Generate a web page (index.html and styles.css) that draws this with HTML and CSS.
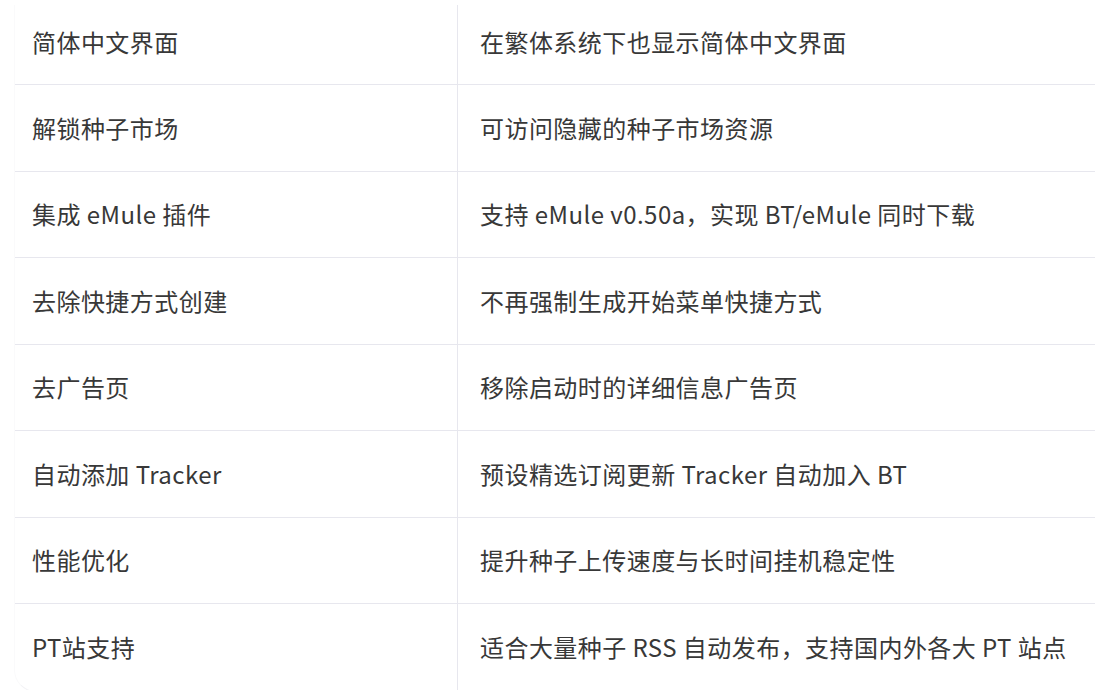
FILE: index.html
```html
<!DOCTYPE html>
<html lang="zh-CN">
<head>
<meta charset="utf-8">
<title>功能列表</title>
<link rel="stylesheet" href="styles.css">
</head>
<body>
<div class="table">
  <div class="cell name first">简体中文界面</div>
  <div class="cell desc first">在繁体系统下也显示简体中文界面</div>
  <div class="cell name">解锁种子市场</div>
  <div class="cell desc">可访问隐藏的种子市场资源</div>
  <div class="cell name">集成 eMule 插件</div>
  <div class="cell desc">支持 eMule v0.50a，实现 BT/eMule 同时下载</div>
  <div class="cell name">去除快捷方式创建</div>
  <div class="cell desc">不再强制生成开始菜单快捷方式</div>
  <div class="cell name">去广告页</div>
  <div class="cell desc">移除启动时的详细信息广告页</div>
  <div class="cell name">自动添加 Tracker</div>
  <div class="cell desc">预设精选订阅更新 Tracker 自动加入 BT</div>
  <div class="cell name">性能优化</div>
  <div class="cell desc">提升种子上传速度与长时间挂机稳定性</div>
  <div class="cell name last">PT站支持</div>
  <div class="cell desc last">适合大量种子 RSS 自动发布，支持国内外各大 PT 站点</div>
</div>
</body>
</html>
```
FILE: styles.css
```css
html, body {
  margin: 0;
  padding: 0;
  background: #ffffff;
}
body {
  width: 1095px;
  height: 690px;
  overflow: hidden;
  font-family: "Noto Sans CJK SC", "Microsoft YaHei", sans-serif;
  color: #383838;
  font-size: 24px;
  letter-spacing: 0.45px;
}
.table {
  margin: 5px 0 0 14px;
  width: 1081px;
  display: grid;
  grid-template-columns: 443px 1fr;
  border-left: 1px solid #fafafb;
  border-bottom-left-radius: 22px;
  border-bottom: 1px solid #f3f3f6;
}
.cell {
  height: 86.5px;
  box-sizing: border-box;
  border-bottom: 1px solid #e7e7ee;
  display: flex;
  align-items: center;
  line-height: 1;
  white-space: nowrap;
}
.cell.first {
  height: 80px;
  padding-bottom: 5px;
}
.cell.last {
  border-bottom: none;
}
.name {
  padding-left: 17px;
  border-right: 1px solid #e7e7ee;
}
.desc {
  padding-left: 22px;
}
```
